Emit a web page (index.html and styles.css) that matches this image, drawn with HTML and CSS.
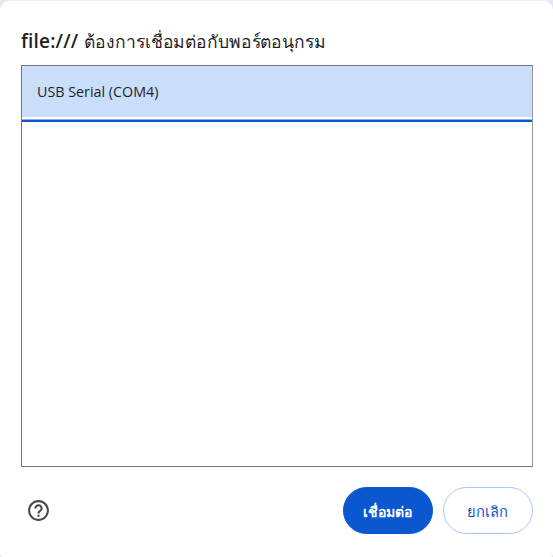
FILE: index.html
```html
<!DOCTYPE html>
<html lang="th">
<head>
<meta charset="utf-8">
<title>พอร์ตอนุกรม</title>
<link rel="stylesheet" href="styles.css">
</head>
<body>
<main class="dialog">
  <h1 class="title"><span class="origin">file:///</span><span class="request">ต้องการเชื่อมต่อกับพอร์ตอนุกรม</span></h1>
  <div class="ports">
    <div class="port">USB Serial (COM4)</div>
  </div>
  <footer class="footer">
    <svg class="help" viewBox="0 0 24 24"><path fill="#474747" d="M11 18h2v-2h-2v2zm1-16C6.480 2 2 6.480 2 12s4.480 10 10 10 10-4.480 10-10S17.520 2 12 2zm0 18c-4.410 0-8-3.590-8-8s3.590-8 8-8 8 3.590 8 8-3.590 8-8 8zm0-14c-2.210 0-4 1.790-4 4h2c0-1.100.9-2 2-2s2 .9 2 2c0 2-3 1.750-3 5h2c0-2.250 3-2.500 3-5 0-2.210-1.790-4-4-4z"/></svg>
    <button class="button primary">เชื่อมต่อ</button>
    <button class="button">ยกเลิก</button>
  </footer>
</main>
</body>
</html>
```
FILE: styles.css
```css
* { box-sizing: border-box; }
body { margin: 0; background: #e4e8ef; font-family: "Open Sans", "Noto Sans", sans-serif; color: #1f1f1f; }
.dialog { height: 557px; padding: 27px 20px 23px 21px; background: #fff; border-top: 1px solid #eef0f2; border-radius: 10px 10px 4px 4px; display: flex; flex-direction: column; }
.title { display: flex; gap: 6px; margin: 0; height: 37px; font-size: 19px; line-height: 26px; font-weight: 400; white-space: nowrap; }
.origin { font-weight: 600; letter-spacing: .2px; }
.request { font-size: 17.5px; line-height: 27px; letter-spacing: -.12px; }
.ports { height: 402px; border: 1px solid #777; border-right-color: #999; }
.port { height: 56px; padding: 0 15px; background: #c9defb; border-bottom: 2px solid #0b57d0; box-shadow: inset 0 -1px #8fb2ea, inset 0 -3px #fff; font-size: 14.3px; line-height: 51px; }
.footer { display: flex; align-items: center; gap: 10px; margin-top: 20px; height: 47px; }
.help { width: 25px; height: 25px; margin: 0 auto 1px 4.5px; }
.button { width: 90px; height: 47px; padding: 2px 2px 0 0; border: 1.5px solid #a8c7fa; border-radius: 24px; background: #fff; color: #0b57d0; font: 400 14.7px "Open Sans", "Noto Sans", sans-serif; }
.primary { padding-right: 1px; background: #0b57d0; border-color: #0b57d0; color: #fff; font-size: 14px; font-weight: 600; }
```
